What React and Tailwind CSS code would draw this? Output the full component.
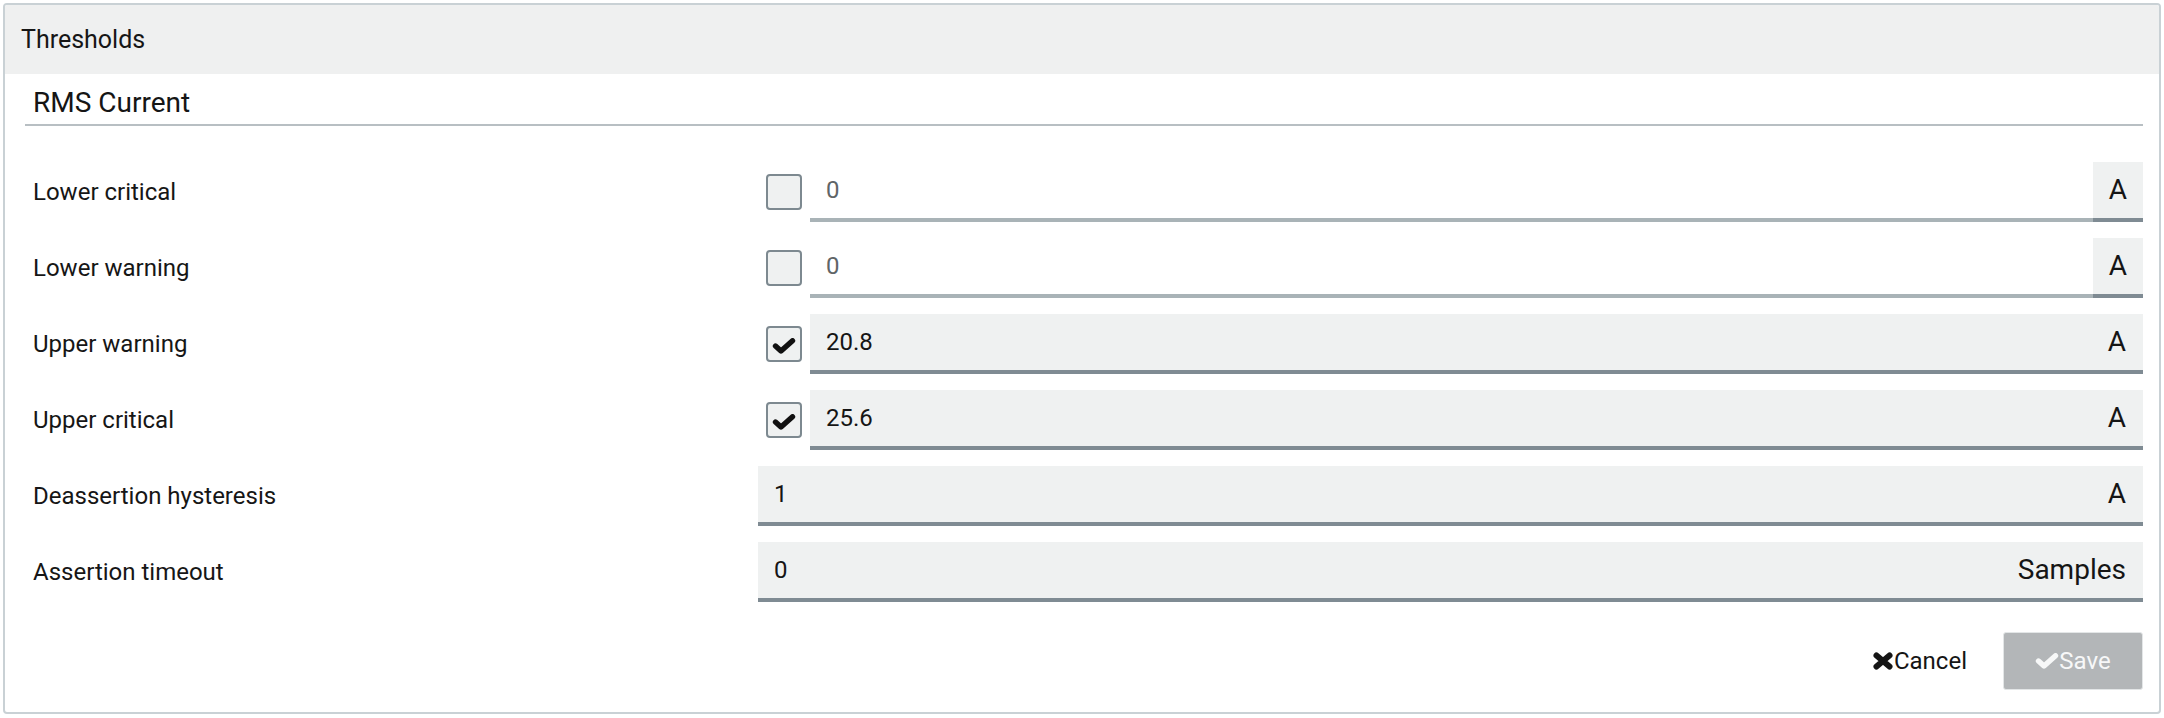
const rows = [
  { label: 'Lower critical', value: '0', unit: 'A', check: true, on: false },
  { label: 'Lower warning', value: '0', unit: 'A', check: true, on: false },
  { label: 'Upper warning', value: '20.8', unit: 'A', check: true, on: true },
  { label: 'Upper critical', value: '25.6', unit: 'A', check: true, on: true },
  { label: 'Deassertion hysteresis', value: '1', unit: 'A', check: false, on: true },
  { label: 'Assertion timeout', value: '0', unit: 'Samples', check: false, on: true },
]

function Tick({ className }) {
  return (
    <svg viewBox="0 0 24 16" className={className}>
      <polyline
        points="3.5,8 9,13 20.5,2.8"
        fill="none"
        stroke="currentColor"
        strokeWidth="5.4"
        strokeLinecap="round"
        strokeLinejoin="round"
      />
    </svg>
  )
}

function Cross() {
  return (
    <svg viewBox="0 0 22 18" className="w-[22px] h-[18px]">
      <path d="M4.5 3.5 L17.5 14.5 M17.5 3.5 L4.5 14.5" stroke="currentColor" strokeWidth="6" strokeLinecap="round" />
    </svg>
  )
}

function Row({ row }) {
  return (
    <div className="flex items-center h-[60px]">
      <div className="w-[733px] pl-[8px] text-[24px] text-[#161616]">{row.label}</div>
      {row.check && (
        <div className="w-[52px] h-full flex items-center justify-center">
          <div className="w-[36px] h-[36px] border-2 border-[#7d8990] rounded-[4px] bg-[#eff1f1] flex items-center justify-center text-[#111]">
            {row.on && <Tick className="w-[24px] h-[16px] mt-[3px]" />}
          </div>
        </div>
      )}
      <div className="flex-1 h-full flex">
        {row.on ? (
          <div className="flex-1 flex items-center justify-between bg-[#eff1f1] border-b-4 border-[#7f8b93] pl-[16px] pr-[17px] text-[24px] text-[#151515]">
            <span>{row.value}</span>
            <span className="text-[28px]">{row.unit}</span>
          </div>
        ) : (
          <>
            <div className="flex-1 flex items-center bg-white border-b-4 border-[#a9b3b7] pl-[16px] text-[24px] text-[#5f6567]">
              {row.value}
            </div>
            <div className="w-[50px] flex items-center justify-center bg-[#eff1f1] border-b-4 border-[#7f8b93] text-[28px] text-[#151515]">
              {row.unit}
            </div>
          </>
        )}
      </div>
    </div>
  )
}

export default function App() {
  return (
    <div className="w-[2164px] h-[718px] bg-white p-[3px] font-['Roboto',sans-serif]">
      <div className="h-[711px] border-2 border-[#c9d1d5] rounded-[4px] flex flex-col overflow-hidden">
        <div className="h-[69px] bg-[#eff0f0] flex items-center pl-[16px] text-[25px] text-[#161616]">
          Thresholds
        </div>
        <div className="pl-[20px] pr-[16px]">
          <div className="pt-[12px] pb-[4px] pl-[8px] border-b-2 border-[#b8bfc3] text-[28px] leading-[34px] text-[#151515]">
            RMS Current
          </div>
          <div className="mt-[36px] flex flex-col gap-[16px]">
            {rows.map((r) => (
              <Row key={r.label} row={r} />
            ))}
          </div>
          <div className="mt-[30px] flex justify-end items-center gap-[36px]">
            <button className="flex items-center text-[24px] text-[#151515]">
              <Cross />
              <span>Cancel</span>
            </button>
            <button className="w-[140px] h-[58px] bg-[#b3b6b8] border border-[#e3e6e7] rounded-[3px] text-[#f7f8f8] text-[24px] flex items-center justify-center">
              <Tick className="w-[24px] h-[16px]" />
              <span>Save</span>
            </button>
          </div>
        </div>
      </div>
    </div>
  )
}
